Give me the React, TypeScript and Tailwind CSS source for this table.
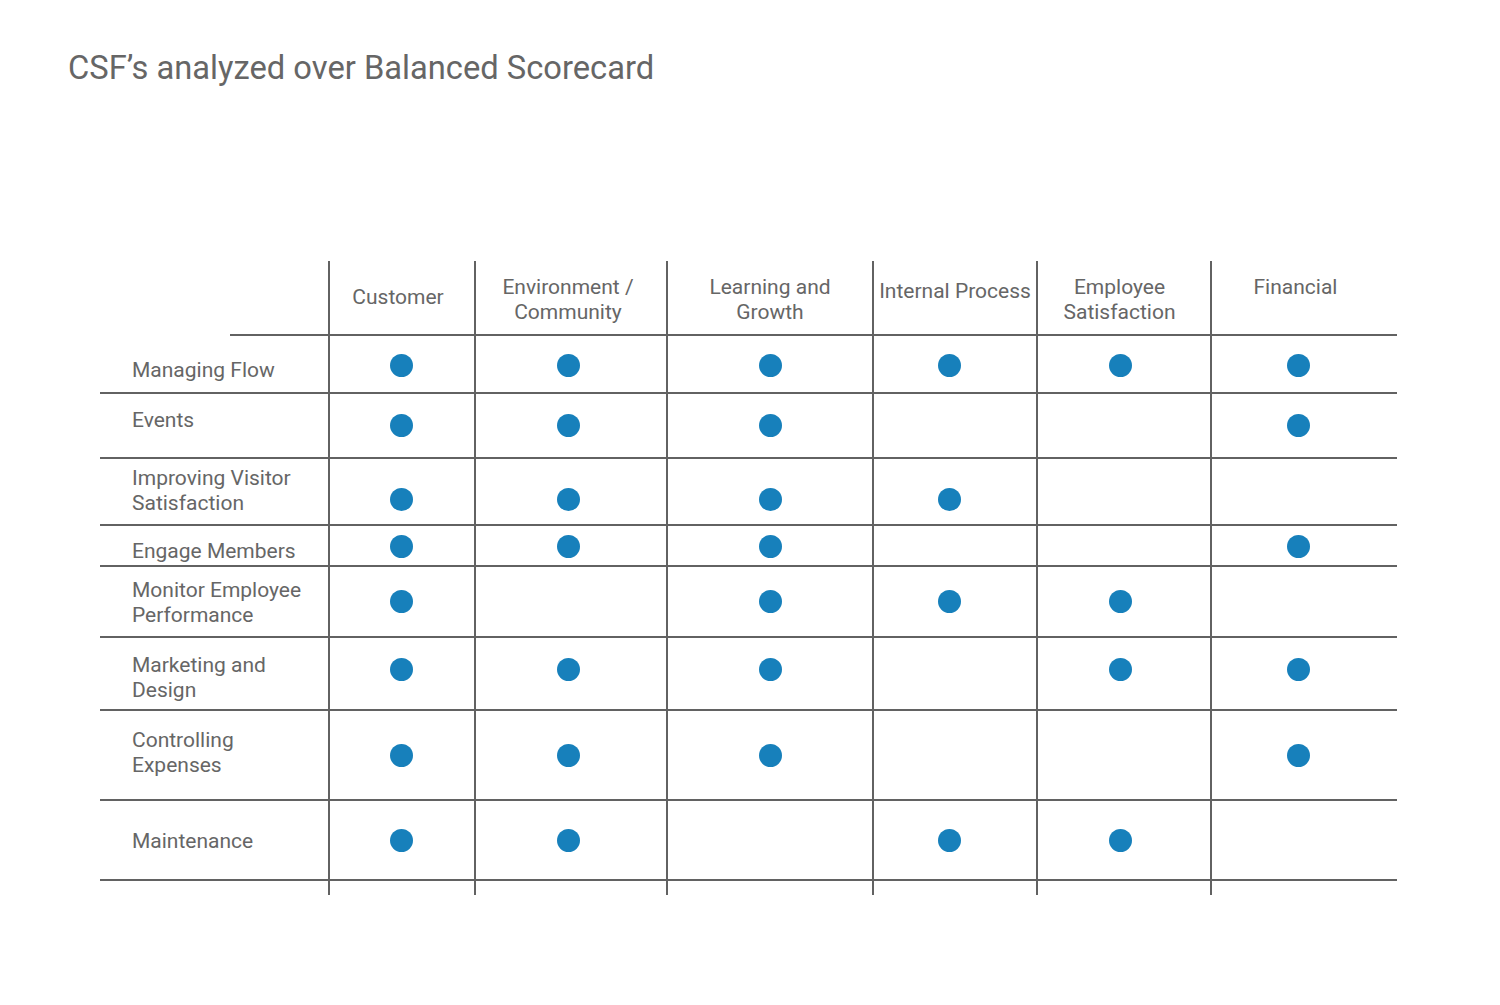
const columns = [
  { name: "Customer", head: "pt-[24px] pr-[8px]", dot: "pl-[60px]" },
  { name: "Environment / Community", head: "pt-[14px] pr-[6px]", dot: "pl-[81px]" },
  { name: "Learning and Growth", head: "pt-[14px] px-[30px]", dot: "pl-[91px]" },
  { name: "Internal Process", head: "pt-[18px]", dot: "pl-[64px]" },
  { name: "Employee Satisfaction", head: "pt-[14px] pl-[18px] pr-[27px]", dot: "pl-[71px]" },
  { name: "Financial", head: "pt-[14px] pr-[18px]", dot: "pl-[75px]" },
];

const rows = [
  { label: "Managing Flow", h: "h-[58px]", lab: "pt-[22px]", dotTop: "pt-[18px]", marks: [1, 1, 1, 1, 1, 1] },
  { label: "Events", h: "h-[65px]", lab: "pt-[14px]", dotTop: "pt-[20px]", marks: [1, 1, 1, 0, 0, 1] },
  { label: "Improving Visitor Satisfaction", h: "h-[67px]", lab: "pt-[7px]", dotTop: "pt-[29px]", marks: [1, 1, 1, 1, 0, 0] },
  { label: "Engage Members", h: "h-[41px]", lab: "pt-[13px]", dotTop: "pt-[9px]", marks: [1, 1, 1, 0, 0, 1] },
  { label: "Monitor Employee Performance", h: "h-[71px]", lab: "pt-[11px]", dotTop: "pt-[23px]", marks: [1, 0, 1, 1, 1, 0] },
  { label: "Marketing and Design", h: "h-[73px]", lab: "pt-[15px]", dotTop: "pt-[20px]", marks: [1, 1, 1, 0, 1, 1] },
  { label: "Controlling Expenses", h: "h-[90px]", lab: "pt-[17px]", dotTop: "pt-[33px]", marks: [1, 1, 1, 0, 0, 1] },
  { label: "Maintenance", h: "h-[80px]", lab: "pt-[28px]", dotTop: "pt-[28px]", marks: [1, 1, 0, 1, 1, 0] },
];

const lineLeft = "border-l-2 border-[#626262]";
const lineBottom = "border-b-2 border-[#626262]";

export default function App() {
  return (
    <div
      className="w-[1500px] h-[1005px] bg-white text-[#666666] pt-[46px]"
      style={{ fontFamily: "Roboto, 'Liberation Sans', sans-serif" }}
    >
      <h1 className="pl-[68px] text-[32.7px] leading-[44px] text-[#666666]">
        CSF’s analyzed over Balanced Scorecard
      </h1>

      <div className="ml-[100px] mt-[171px] grid grid-cols-[228px_146px_192px_206px_164px_174px_187px] text-[21px] leading-[25px]">
        {/* header */}
        <div className="h-[75px] flex items-end">
          <div className={`ml-[130px] w-full ${lineBottom}`} />
        </div>
        {columns.map((c) => (
          <div key={c.name} className={`h-[75px] ${lineLeft} ${lineBottom} text-center ${c.head}`}>
            {c.name}
          </div>
        ))}

        {/* rows */}
        {rows.map((r) => (
          <>
            <div key={r.label} className={`${r.h} ${lineBottom} pl-[32px] pr-[20px] ${r.lab}`}>
              {r.label}
            </div>
            {columns.map((c, i) => (
              <div key={r.label + c.name} className={`${r.h} ${lineLeft} ${lineBottom} ${c.dot} ${r.dotTop}`}>
                {r.marks[i] ? <div className="w-[23px] h-[23px] rounded-full bg-[#1780bb]" /> : null}
              </div>
            ))}
          </>
        ))}

        {/* tail of vertical lines */}
        <div className="h-[14px]" />
        {columns.map((c) => (
          <div key={"tail" + c.name} className={`h-[14px] ${lineLeft}`} />
        ))}
      </div>
    </div>
  );
}
